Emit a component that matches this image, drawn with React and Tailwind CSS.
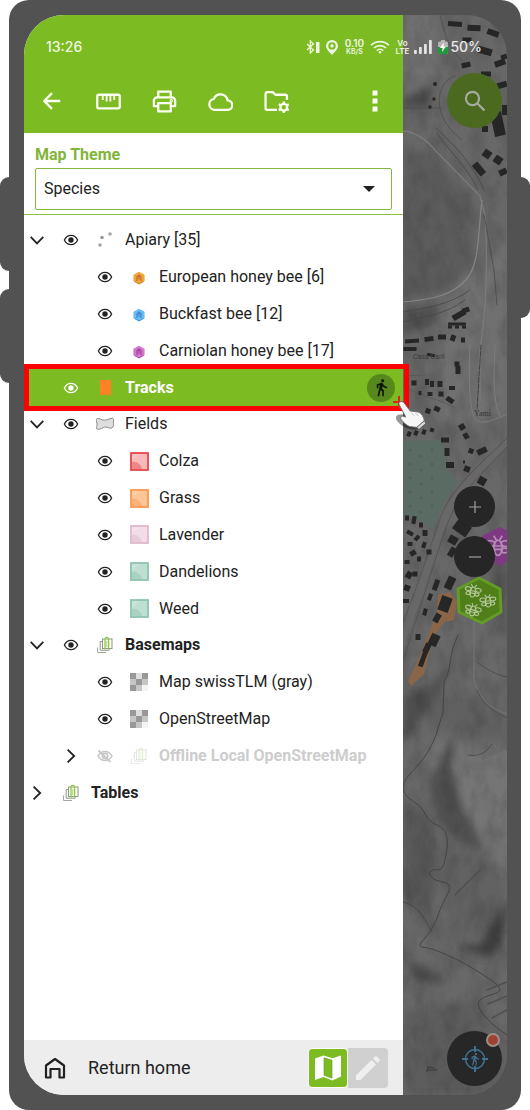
import React from "react";

function EyeIcon() {
  return (
    <svg viewBox="0 0 16 12" className="h-3 w-4" fill="none">
      <path d="M1.4 6C2.800 3 5 1.300 8 1.300S13.200 3 14.600 6C13.200 9 11 10.700 8 10.700S2.800 9 1.400 6Z" stroke="currentColor" strokeWidth="1.3" />
      <circle cx="8" cy="6" r="2.700" fill="currentColor" />
    </svg>
  );
}

function EyeOffIcon() {
  return (
    <svg viewBox="0 0 16 14" className="h-[14px] w-4" fill="none" stroke="currentColor" strokeWidth="1.6">
      <path d="M1.1 7C2.6 4 5 2.5 8 2.5S13.4 4 14.9 7C13.4 10 11 11.5 8 11.5S2.6 10 1.1 7Z" />
      <circle cx="8" cy="7" r="2.6" />
      <path d="M1.5 1.5 13.5 13.2" strokeWidth="1.8" />
    </svg>
  );
}

function Chevron({ open }) {
  return (
    <svg viewBox="0 0 16 16" className="h-4 w-4" fill="none" stroke="currentColor" strokeWidth="1.8">
      {open ? <path d="M1.7 4.8 8 11.4l6.3-6.6" /> : <path d="M4.6 1.7 11.2 8l-6.6 6.3" />}
    </svg>
  );
}

function PointsIcon() {
  return (
    <svg viewBox="0 0 18 18" className="h-[18px] w-[18px]">
      <circle cx="4" cy="14" r="1.8" fill="#a5a5a5" />
      <circle cx="6" cy="6.5" r="1.8" fill="#9a9a9a" />
      <circle cx="14" cy="3" r="1.8" fill="#a5a5a5" />
    </svg>
  );
}

function BeeDot({ fill, edge }) {
  return (
    <svg viewBox="0 0 14 14" className="mt-[2px] h-[14px] w-[14px]">
      <path d="M7 1.800 11.600 4.300v5.400L7 12.200 2.400 9.700V4.300Z" fill={fill} stroke={fill} strokeWidth="2" strokeLinejoin="round" />
      <path d="M5 10V5.800L7 4l2 1.800V10M7 5v3.500" fill="none" stroke={edge} strokeWidth="1.2" />
      <path d="M2.500 10.500 7 13l4.500-2.500" fill="none" stroke={edge} strokeWidth="0.8" />
    </svg>
  );
}

function FieldIcon() {
  return (
    <svg viewBox="0 0 20 14" className="h-[14px] w-5">
      <path d="M2.2 1.5C4.5.8 6 3.2 9.5 3.2S15.2.8 17.8 1.3c1 .3.8 2 .6 4s.6 3.200-.4 4.600-2.800 1.600-4.600.8-3.600-1-5.200 0S2.600 13 1.700 11.800C1 10.500 2.400 9 2 6.800S.8 2 2.200 1.500Z" fill="#dedede" stroke="#8b8b8b" strokeWidth="1" />
    </svg>
  );
}

function Swatch({ fill, edge }) {
  return (
    <svg viewBox="0 0 19 19" className="h-[19px] w-[19px]">
      <rect x="1" y="1" width="17" height="17" fill={fill} stroke={edge} strokeWidth="1.8" />
      <path d="M2 10C7 9 11 13 12 17H2Z" fill={edge} opacity="0.45" />
      <path d="M2 2h8L2 9Z" fill="#fff" opacity="0.15" />
    </svg>
  );
}

function BookmarkIcon() {
  return (
    <svg viewBox="0 0 11 16" className="h-4 w-[11px]">
      <path d="M0 0h11v16l-2.500-1.300h-6L0 16Z" fill="#ff8126" />
    </svg>
  );
}

function GroupIcon() {
  return (
    <svg viewBox="0 0 18 18" className="h-[18px] w-[18px]" fill="none">
      <path d="M1.500 11.500v5h8.500" stroke="#a3aa9d" strokeWidth="1" />
      <path d="M6 5.500H4.200v8.700h9V12" stroke="#8d9785" strokeWidth="1" />
      <rect x="6.500" y="3" width="9.500" height="9.500" stroke="#8d9785" strokeWidth="1" />
      <path d="M9 13.500V3.400c0-2.600 3.600-2.600 3.600 0v9.600" stroke="#8fc83c" strokeWidth="1.300" />
      <path d="M10.800 5v6" stroke="#a9d568" strokeWidth="1" />
    </svg>
  );
}

function RasterIcon() {
  return (
    <svg viewBox="0 0 18 18" className="h-[18px] w-[18px]" shapeRendering="crispEdges">
      <path d="M0 0h18v6h-6v6H6v6H0Z" fill="#c9c9c9" />
      <path d="M0 0h6v6H0zM12 0h6v6h-6zM6 6h6v6H6zM0 12h6v6H0z" fill="#989898" />
      <path d="M0 6h6v6H0zM12 6h6v6h-6zM6 12h6v6H6z" fill="#c6c6c6" />
      <path d="M12 12h6v6h-6z" fill="#f4f4f4" />
      <path d="M6 0h6v6H6z" fill="#dedede" />
    </svg>
  );
}

function WalkIcon({ className }) {
  return (
    <svg viewBox="0 0 24 24" className={className} fill="currentColor">
      <path d="M13.500 5.500c1.100 0 2-.9 2-2s-.9-2-2-2-2 .9-2 2 .9 2 2 2zM9.800 8.900 7 23h2.100l1.800-8 2.100 2v6h2v-7.500l-2.100-2 .6-3C14.800 12 16.800 13 19 13v-2c-1.900 0-3.500-1-4.300-2.400l-1-1.600c-.4-.6-1-1-1.700-1-.3 0-.5.1-.8.1L6 8.300V13h2V9.600l1.800-.7" />
    </svg>
  );
}

const rows = [
  { level: 0, chevron: "open", eye: "on", icon: <PointsIcon />, label: "Apiary [35]" },
  { level: 1, eye: "on", icon: <BeeDot fill="#f0a43c" edge="#bf7426" />, label: "European honey bee [6]" },
  { level: 1, eye: "on", icon: <BeeDot fill="#69bdf6" edge="#3b86cc" />, label: "Buckfast bee [12]" },
  { level: 1, eye: "on", icon: <BeeDot fill="#d576d0" edge="#984597" />, label: "Carniolan honey bee [17]" },
  { level: 0, eye: "on", icon: <BookmarkIcon />, label: "Tracks", bold: true, active: true },
  { level: 0, chevron: "open", eye: "on", icon: <FieldIcon />, label: "Fields" },
  { level: 1, eye: "on", icon: <Swatch fill="#f7b9b9" edge="#e4484c" />, label: "Colza" },
  { level: 1, eye: "on", icon: <Swatch fill="#fdc595" edge="#fa9850" />, label: "Grass" },
  { level: 1, eye: "on", icon: <Swatch fill="#f1dce8" edge="#dfb9cd" />, label: "Lavender" },
  { level: 1, eye: "on", icon: <Swatch fill="#bfdfd3" edge="#8dc4b0" />, label: "Dandelions" },
  { level: 1, eye: "on", icon: <Swatch fill="#bfdfd3" edge="#8dc4b0" />, label: "Weed" },
  { level: 0, chevron: "open", eye: "on", icon: <GroupIcon />, label: "Basemaps", bold: true },
  { level: 1, eye: "on", icon: <RasterIcon />, label: "Map swissTLM (gray)" },
  { level: 1, eye: "on", icon: <RasterIcon />, label: "OpenStreetMap" },
  { level: 1, chevron: "closed", eye: "off", icon: <GroupIcon />, label: "Offline Local OpenStreetMap", bold: true, dim: true },
  { level: 0, chevron: "closed", icon: <GroupIcon />, label: "Tables", bold: true },
];

function PointerHand() {
  return (
    <svg viewBox="0 0 36 40" className="pointer-events-none absolute -right-[26px] -bottom-[30px] h-10 w-9" fill="none">
      <ellipse cx="15" cy="26" rx="13" ry="6" fill="#000" opacity="0.4" transform="rotate(25 15 26)" />
      <path d="M6 0v12M0 6h12" stroke="#e0231b" strokeWidth="2" />
      <path d="M6.500 6.300C8 4.800 10.200 5.500 11.200 7l6 8 8 1c3.500 1.200 5.600 5 6.300 9.500L25 31.500l-8.500-1c-3-1-6.500-4.500-8.500-7.200-1.200-2.300.8-3.800 3-2.800l1.800.6L6.300 9c-.6-1-.5-2 .2-2.700Z" fill="#f6f6f6" stroke="#6b6b6b" strokeWidth="0.900" />
      <path d="m23.500 31.500 8-7 1.500 3-7 6Z" fill="#d5d5d5" stroke="#4d4d4d" strokeWidth="0.900" />
      <path d="m18 16.500 3 3M22.500 17l3 3" stroke="#b5b5b5" strokeWidth="0.800" />
    </svg>
  );
}

function LayerRow({ row }) {
  const tone = row.active ? "bg-[#7dbb23] text-white" : "text-[#222]";
  const faded = row.dim ? "opacity-25" : "";
  return (
    <li className={`relative flex min-h-0 items-center ${tone} ${row.level === 1 ? "pl-[34px]" : ""}`}>
      <span className="flex w-[30px] shrink-0 justify-center pr-1">
        {row.chevron && (
          <button type="button" aria-label={`Toggle ${row.label}`} aria-expanded={row.chevron === "open"}>
            <Chevron open={row.chevron === "open"} />
          </button>
        )}
      </span>
      {row.eye && (
        <button type="button" aria-label={`Visibility of ${row.label}`} className={`flex w-[34px] shrink-0 justify-center ${faded}`}>
          {row.eye === "on" ? <EyeIcon /> : <EyeOffIcon />}
        </button>
      )}
      <span className={`flex w-[34px] shrink-0 justify-center ${faded}`}>{row.icon}</span>
      <span className={`flex-1 truncate pl-[3px] text-base ${row.bold ? "font-bold" : ""} ${row.dim ? "text-[#cdcdcd]" : ""}`}>
        {row.label}
      </span>
      {row.active && (
        <>
          <button type="button" aria-label="Start tracking" className="mr-2 flex h-7 w-7 items-center justify-center rounded-full bg-[#57881b] text-[#0d1503]">
            <WalkIcon className="h-[19px] w-[19px]" />
          </button>
          <span className="pointer-events-none absolute -inset-y-[5px] -right-[6px] left-0 border-[5px] border-[#fd0000]" />
          <PointerHand />
        </>
      )}
    </li>
  );
}

const signalBars = [
  [0, 10, 4], [5, 7, 7], [10, 4, 10], [15, 0, 14],
];

function StatusBar() {
  return (
    <div className="absolute inset-x-0 top-0 z-20 flex h-16 items-center justify-between pr-[25px] pl-[22px] font-['Inter',sans-serif] text-[#eef6e0]">
      <span className="text-sm font-medium">13:26</span>
      <div className="flex items-center gap-[6px]">
        <svg viewBox="0 0 14 14" className="h-[14px] w-[14px]" fill="none">
          <path d="m1 4 6.500 6L4.300 13V1l3.200 3L1 10" stroke="currentColor" strokeWidth="1.300" />
          <rect x="10" y="2" width="3.500" height="11" rx="0.500" fill="currentColor" />
        </svg>
        <svg viewBox="0 0 12 15" className="h-[15px] w-3">
          <path fillRule="evenodd" d="M6 0a6 6 0 0 1 6 6c0 3.500-4 6.500-6 9C4 12.500 0 9.500 0 6a6 6 0 0 1 6-6Zm0 2.200A3.700 3.700 0 1 0 6 9.600 3.700 3.700 0 0 0 6 2.200Z" fill="currentColor" />
          <path d="M6 3.500 8 6 6 8 4 6Z" fill="currentColor" />
        </svg>
        <span className="flex w-5 flex-col items-center font-semibold">
          <span className="text-[10px] leading-[9px]">0.10</span>
          <span className="text-[7px] leading-[7px]">KB/S</span>
        </span>
        <svg viewBox="0 0 20 14" className="h-[14px] w-5" fill="none" stroke="currentColor" strokeWidth="1.700">
          <path d="M1 5.200a13 13 0 0 1 18 0M4 8a8.600 8.600 0 0 1 12 0M6.800 10.600a4.600 4.600 0 0 1 6.400 0" />
          <circle cx="10" cy="12.300" r="1.300" fill="currentColor" stroke="none" />
        </svg>
        <span className="flex w-3 flex-col items-center font-semibold">
          <span className="text-[8px] leading-[8px]">Vo</span>
          <span className="text-[8px] leading-[8px]">LTE</span>
        </span>
        <svg viewBox="0 0 18 14" className="h-[14px] w-[18px]" fill="#e3e3e3">
          {signalBars.map(([x, y, h]) => (
            <rect key={x} x={x} y={y} width="2.800" height={h} rx="0.800" />
          ))}
        </svg>
        <span className="flex items-center gap-[2px] text-[#e9e9e9]">
          <svg viewBox="0 0 10 14" className="h-[14px] w-[10px]">
            <path d="M3 0h4v1.500h1.500A1.500 1.500 0 0 1 10 3v9.500A1.500 1.500 0 0 1 8.500 14h-7A1.500 1.500 0 0 1 0 12.500V3a1.500 1.500 0 0 1 1.500-1.500H3Z" fill="#b5b5b5" />
            <path d="M0 7h10v5.500A1.500 1.500 0 0 1 8.500 14h-7A1.500 1.500 0 0 1 0 12.500Z" fill="#1f9a3c" />
            <path d="M6 2.500 2 8h2.500L4 12l4-5.500H5.500Z" fill="#fff" />
          </svg>
          <span className="text-sm font-medium">50%</span>
        </span>
      </div>
    </div>
  );
}

const tools = [
  {
    name: "Back",
    art: <path d="M21 12H4M12 3.500 3.500 12l8.500 8.500" strokeWidth="2.600" />,
  },
  {
    name: "Measure",
    art: <><rect x="1.200" y="5.500" width="21.600" height="13" rx="1.500" /><path d="M6.500 6v4.500M10.200 6v6M13.800 6v6M17.500 6v4.500" strokeWidth="1.800" /></>,
  },
  {
    name: "Print",
    art: <><path d="M6 7V2.500h12V7M6 16.500H1.800V11A3.500 3.500 0 0 1 5 8h14a3.500 3.500 0 0 1 3.200 3v5.500H18" /><rect x="6" y="13.500" width="12" height="8" /><circle cx="18.500" cy="11.300" r="0.600" /></>,
  },
  {
    name: "Cloud",
    art: <path d="M6.500 20A5.300 5.300 0 0 1 5.600 9.500 6.800 6.800 0 0 1 18.700 11 4.500 4.500 0 0 1 19 20Z" />,
  },
  {
    name: "Project folder",
    art: (
      <>
        <path d="M12.500 20H3a1.500 1.500 0 0 1-1.500-1.500v-14A1.500 1.500 0 0 1 3 3h5.500L11 5.500h9.500A1.500 1.500 0 0 1 22 7v3.500" />
        <circle cx="19" cy="17.500" r="3.200" />
        <path d="M19 12v2M19 21v2M14.200 14.700l1.800 1M22 19.300l1.800 1M14.200 20.300l1.800-1M22 15.700l1.800-1" />
      </>
    ),
  },
];

function Toolbar() {
  return (
    <div className="flex h-16 items-center text-[#fbfff2]">
      {tools.map((t) => (
        <button key={t.name} type="button" aria-label={t.name} className="flex w-14 justify-center">
          <svg viewBox="0 0 24 24" className={t.name === "Back" ? "h-[22px] w-[22px]" : "h-[25px] w-[25px]"} fill="none" stroke="currentColor" strokeWidth="2.200" strokeLinejoin="round">
            {t.art}
          </svg>
        </button>
      ))}
      <button type="button" aria-label="More" className="ml-auto flex w-14 justify-center">
        <svg viewBox="0 0 6 22" className="h-[22px] w-[6px]" fill="currentColor">
          <rect x="0.500" y="0.500" width="5" height="5" />
          <rect x="0.500" y="8.500" width="5" height="5" />
          <rect x="0.500" y="16.500" width="5" height="5" />
        </svg>
      </button>
    </div>
  );
}

function Drawer() {
  return (
    <div className="relative z-10 flex min-w-0 flex-1 flex-col bg-white">
      <header className="bg-[#7dbb23] pt-[54px]">
        <Toolbar />
      </header>
      <div className="border-b border-[#8fbd4a] px-[11px] pt-3 pb-1">
        <label htmlFor="theme" className="block text-base leading-5 font-bold text-[#82b438]">
          Map Theme
        </label>
        <div className="relative mt-[3px]">
          <select id="theme" defaultValue="Species" className="block h-[42px] w-full appearance-none rounded-xs border border-[#86b63c] bg-white pl-2 text-base text-[#222]">
            <option>Species</option>
          </select>
          <svg viewBox="0 0 12 6" className="pointer-events-none absolute top-[18px] right-[17px] h-[6px] w-3">
            <path d="M0 0h12L6 6Z" fill="#222" />
          </svg>
        </div>
      </div>
      <ul className="mt-[7px] grid h-[589px] auto-rows-fr">
        {rows.map((row) => (
          <LayerRow key={row.label} row={row} />
        ))}
      </ul>
      <footer className="mt-auto flex h-[55px] items-center bg-[#ededed] pr-[15px] pl-5 text-[#222]">
        <a href="#home" className="flex items-center gap-[22px] text-lg">
          <svg viewBox="0 0 22 22" className="h-[22px] w-[22px]" fill="none" stroke="currentColor" strokeWidth="2.200">
            <path d="M2 20.500V8.500L11 2l9 6.500v12h-4.500V12h-9v8.500Z" strokeLinejoin="round" />
          </svg>
          Return home
        </a>
        <div className="ml-auto flex">
          <button type="button" aria-label="Map mode" className="flex h-10 w-10 items-center justify-center rounded-sm border border-white bg-[#7dbb23]">
            <svg viewBox="0 0 26 26" className="h-[26px] w-[26px]">
              <path d="M0 3.500 8.500.5l9 2.800L26 .5v21l-8.500 4-9-3.500L0 25Z" fill="#fff" />
              <path d="M9 2.800 17 5.200v18L9 20.200Z" fill="#7dbb23" stroke="#5f9914" strokeWidth="0.600" />
            </svg>
          </button>
          <button type="button" aria-label="Edit mode" className="flex h-10 w-10 items-center justify-center rounded-r-sm bg-[#d0d0d0]">
            <svg viewBox="0 0 24 24" className="h-6 w-6" fill="#efefef">
              <path d="M0 24v-4.500L15.500 4 20 8.500 4.500 24ZM17 2.500 18.800.7a1.600 1.600 0 0 1 2.200 0l2.300 2.300a1.600 1.600 0 0 1 0 2.200L21.500 7Z" />
            </svg>
          </button>
        </div>
      </footer>
    </div>
  );
}

/* x, y, width, height, rotation */
const buildings = [
  [455, 24, 14, 5, 5], [474, 28, 13, 6, 3], [493, 33, 12, 6, 20], [467, 40, 9, 5, 0], [485, 51, 14, 7, 15],
  [466, 65, 9, 5, -12], [500, 63, 11, 6, -20], [504, 57, 6, 5, -20], [486, 74, 10, 5, 0], [502, 85, 10, 6, -15],
  [505, 110, 6, 10, 0], [498, 124, 11, 24, -12], [485, 129, 6, 6, 0], [487, 154, 8, 8, 35], [498, 160, 8, 8, 35],
  [479, 169, 7, 14, -40], [503, 172, 8, 6, -25],
  [459, 315, 14, 6, -30], [466, 310, 7, 5, -20], [457, 324, 18, 3, 0], [450, 327, 4, 3, 0], [457, 327, 4, 3, 0], [464, 327, 4, 3, 0],
  [412, 341, 14, 4, -5], [429, 339, 9, 5, -8], [442, 337, 8, 5, 0], [453, 338, 5, 6, 20], [463, 340, 4, 5, 0],
  [410, 349, 13, 4, 0], [457, 364, 5, 5, 0], [458, 370, 5, 8, 0], [431, 355, 8, 3, 10],
  [414, 383, 5, 5, 0], [427, 382, 4, 6, 0], [432, 384, 4, 6, 0], [440, 384, 5, 6, 0], [452, 388, 6, 4, 0],
  [407, 391, 4, 6, 0], [430, 394, 5, 4, 0], [441, 394, 5, 5, 0], [450, 400, 8, 5, 35], [420, 393, 3, 4, 0],
  [428, 411, 5, 5, 20], [437, 409, 6, 5, 25], [409, 434, 4, 5, 20], [416, 433, 4, 5, 20], [424, 432, 4, 5, 20], [432, 430, 4, 4, 20],
  [445, 440, 8, 5, 0], [447, 452, 5, 8, 0], [450, 465, 8, 6, 0], [462, 427, 6, 6, -30], [466, 436, 5, 6, -30],
  [467, 469, 6, 6, 20], [471, 451, 5, 5, 20], [482, 451, 10, 6, -25], [482, 481, 8, 8, 30], [464, 462, 2, 3, 0],
  [462, 528, 16, 12, 35], [453, 540, 9, 8, 30], [452, 552, 6, 10, 30],
  [407, 518, 4, 5, 0], [414, 520, 4, 8, 10], [421, 525, 4, 5, 0], [410, 533, 7, 4, 30], [425, 533, 5, 6, 0], [417, 538, 4, 6, 40],
  [410, 544, 5, 4, 0], [424, 545, 4, 6, 20], [429, 552, 5, 5, 0], [413, 553, 6, 5, -30], [407, 562, 5, 4, 0], [419, 559, 4, 5, 0],
  [409, 575, 6, 7, 30], [415, 574, 5, 5, 0], [407, 588, 6, 6, 20], [406, 601, 6, 4, 0],
  [450, 583, 8, 13, 25], [445, 604, 11, 15, 20], [437, 618, 6, 9, 30], [434, 640, 9, 12, 25], [427, 648, 6, 10, 25], [423, 659, 5, 16, 20],
  [436, 585, 5, 11, 20], [430, 597, 4, 7, 20], [425, 612, 4, 7, 15], [418, 637, 5, 6, 0],
];

function Bee({ x, y, turn, scale, color }) {
  return (
    <g transform={`translate(${x} ${y}) rotate(${turn}) scale(${scale})`} fill="none" stroke={color} strokeWidth="1">
      <ellipse cx="0" cy="1" rx="2.400" ry="4.500" />
      <path d="M-2.200 0h4.400M-2.300 2h4.600M-1 -3.500-2.500-6M1-3.500 2.500-6" />
      <ellipse cx="-4.600" cy="-1.400" rx="2.700" ry="1.700" />
      <ellipse cx="4.600" cy="-1.400" rx="2.700" ry="1.700" />
      <ellipse cx="-4" cy="2.600" rx="2" ry="1.400" />
      <ellipse cx="4" cy="2.600" rx="2" ry="1.400" />
    </g>
  );
}

function Terrain() {
  return (
    <svg viewBox="403 15 104 1080" preserveAspectRatio="xMinYMin slice" className="absolute inset-0 h-full w-full">
      <defs>
        <filter id="soft" x="-30%" y="-30%" width="160%" height="160%"><feGaussianBlur stdDeviation="4" /></filter>
        <filter id="grain" x="0" y="0" width="100%" height="100%">
          <feTurbulence type="fractalNoise" baseFrequency="0.07 0.04" numOctaves="4" seed="7" />
          <feColorMatrix values="0 0 0 0 0  0 0 0 0 0  0 0 0 0 0  1.600 0 0 0 -0.600" />
        </filter>
      </defs>
      <rect x="403" y="15" width="104" height="1080" fill="#686868" />
      <g filter="url(#soft)">
        <path d="M403 15h30l5 60-35 30Z" fill="#717171" />
        <path d="M403 95c15-2 25-5 32-14l-5 22-27 8Z" fill="#4b4b4b" />
        <path d="M403 150 430 150 475 205 470 270 440 292 403 296Z" fill="#5c5c5c" />
        <path d="M403 310 445 302 476 275 470 300 440 322 403 335Z" fill="#505050" />
        <path d="M440 300 507 240V420H440Z" fill="#707070" />
        <path d="M470 590h37v140h-70Z" fill="#696969" />
        <path d="M460 628 450 665 425 690 403 695V745L435 700 455 660Z" fill="#4e4e4e" />
        <path d="M430 700 470 690 507 720V740L450 735Z" fill="#616161" />
        <path d="M436 735 452 735 448 765 428 775Z" fill="#787878" />
        <path d="M403 800 430 815 440 860 430 930 403 900Z" fill="#585858" />
        <path d="M454 733 450 765 460 790 475 820 487 852 462 845 440 822 428 780Z" fill="#505050" />
        <path d="M455 865 475 850 470 885 455 890Z" fill="#777" />
        <path d="M440 895 452 897 445 915 435 920Z" fill="#757575" />
        <path d="M440 850 500 855 507 900 480 940 445 935Z" fill="#626262" />
        <path d="M495 915 507 905 500 950 485 957 455 945 480 945Z" fill="#3c3c3c" />
        <path d="M405 960 440 975 445 985 415 980Z" fill="#494949" />
        <path d="M403 1010 480 1000 507 1095H403Z" fill="#5d5d5d" />
        <path d="M490 560 507 555V640L495 620Z" fill="#555" />
      </g>
      <path d="M455 775C452 762 456 748 461 740l10 8 12 12 22-13 2 2v132l-18-24-12-26-13-18Z" fill="#757575" filter="url(#soft)" />
      <path d="M462 770 470 755 483 760 505 750 507 752v120l-16-22-12-26-12-20Z" fill="#757575" />
      <rect x="403" y="15" width="104" height="1080" filter="url(#grain)" opacity="0.16" />
      <path d="M403 441 443 440 449 470 457 482 441 509 433 530 420 520 403 514Z" fill="#5a6b64" />
      <g fill="#526159">
        {[450, 464, 478, 492, 506].map((y) => (
          <g key={y}>
            <circle cx="410" cy={y} r="1.500" />
            <circle cx="421" cy={y + 6} r="1.500" />
            <circle cx="432" cy={y} r="1.500" />
          </g>
        ))}
      </g>
      <g fill="none" strokeLinecap="round">
        <path d="M507 442C485 465 455 490 445 518S418 600 403 640" stroke="#696768" strokeWidth="6" />
        <path d="M507 438C483 462 451 488 441 516S414 596 403 622" stroke="#4c4c4c" strokeWidth="0.700" />
        <path d="M507 447C488 468 460 492 449 520S422 604 403 660" stroke="#4c4c4c" strokeWidth="0.700" />
        <path d="M403 131C415 132 425 138 435 150L480 196 485 215C488 260 486 310 480 350V400" stroke="#7a7a7a" strokeWidth="1.300" />
        <path d="M482 200C478 230 480 265 466 280S435 299 403 302" stroke="#858585" strokeWidth="1.200" />
        <path d="M403 312C425 308 450 305 470 290M403 322C425 316 445 315 465 300" stroke="#474747" strokeWidth="0.800" />
        <path d="M484 215 494 270 497 305M436 128C450 142 470 158 484 190M437 133C452 155 466 165 478 190" stroke="#454545" strokeWidth="0.700" />
        <path d="M481 345 477 410" stroke="#3b3b3b" strokeWidth="0.900" strokeDasharray="5 1.500" />
        <path d="M403 108 440 108C437 95 442 80 455 76M440 108C442 122 455 135 462 140M440 15 447 40C455 55 462 62 470 66" stroke="#4a4a4a" strokeWidth="0.700" />
        <path d="M470 345C468 380 470 415 476 420S495 420 507 414M495 345C494 370 492 400 500 416" stroke="#7d7d7d" strokeWidth="1" />
        <path d="M403 376 425 375M403 385C420 398 440 398 455 408" stroke="#555" strokeWidth="0.800" />
        <path d="M458 635C448 655 452 670 444 682L443 712 436 735C430 750 425 758 410 774S408 798 417 804 425 820 435 824 450 835 446 855 440 868 433 870 430 880 443 882 446 896 442 905 436 925 425 938 422 944 440 952 460 960 488 978 487 992 480 1000 492 1025 507 1035" stroke="#414141" strokeWidth="0.900" />
        <path d="M403 902C418 905 424 918 432 932M468 755C480 757 487 752 492 744" stroke="#424242" strokeWidth="0.700" />
        <path d="M474 615V680C480 700 490 708 507 714" stroke="#787878" strokeWidth="0.900" />
        <path d="M477 662C487 670 497 675 507 677M477 690C485 708 495 712 507 718" stroke="#464646" strokeWidth="0.700" />
        <path d="M428 1067 427 1072M427 1070h10M428 1067l6 1" stroke="#333" strokeWidth="0.800" />
        <path d="M487 990 507 982M488 1004 507 996M492 1018 507 1010M455 895 480 870" stroke="#4f4f4f" strokeWidth="1.500" />
      </g>
      <path d="M438 595 450 592 457 602 454 620 444 622 436 633 430 650 424 674 411 686 408 681 420 656 430 630 437 612Z" fill="#8b6547" />
      <g fill="#262626">
        {buildings.map(([x, y, w, h, r]) => (
          <rect key={`${x}-${y}`} x={x - w / 2} y={y - h / 2} width={w} height={h} transform={`rotate(${r} ${x} ${y})`} />
        ))}
        <circle cx="435" cy="84" r="2" />
        <circle cx="434" cy="99" r="1.700" />
        <circle cx="430" cy="107" r="1.700" />
      </g>
      <text x="413" y="359" fontSize="7" fill="#3a3a3a">Casa Carli</text>
      <text x="474" y="416" fontSize="8" fill="#333" className="font-['Liberation_Serif',serif]">Yami</text>
      <path d="M500 527 518 536V555L500 566 482 555V536Z" fill="#7d3a82" />
      <Bee x={498} y={546} turn={0} scale={1.700} color="#b48cb6" />
      <path d="M479 578 500 589 501 612 482 623 459 612 458 589Z" fill="#507f19" stroke="#649b27" strokeWidth="3" strokeLinejoin="round" />
      <Bee x={473} y={591} turn={10} scale={1.100} color="#b4c79c" />
      <Bee x={488} y={601} turn={-5} scale={1.100} color="#b4c79c" />
      <Bee x={473} y={610} turn={15} scale={1.100} color="#b4c79c" />
    </svg>
  );
}

function MapView() {
  const round = "absolute flex items-center justify-center rounded-full";
  return (
    <div className="relative w-[104px] shrink-0">
      <Terrain />
      <button type="button" aria-label="Search" className={`${round} top-[58px] right-[5px] h-[55px] w-[55px] bg-[#4b6a20] text-[#a6ab9f]`}>
        <svg viewBox="0 0 22 22" className="h-[22px] w-[22px]" fill="none" stroke="currentColor" strokeWidth="2.200">
          <circle cx="8.500" cy="8.500" r="6.600" />
          <path d="m13.500 13.500 7 7" />
        </svg>
      </button>
      <button type="button" aria-label="Zoom in" className={`${round} top-[471px] right-3 h-[41px] w-[41px] bg-[#262626] text-[#a0a0a0]`}>
        <svg viewBox="0 0 12 12" className="h-3 w-3" stroke="currentColor" strokeWidth="1.200"><path d="M0 6h12M6 0v12" /></svg>
      </button>
      <button type="button" aria-label="Zoom out" className={`${round} top-[521px] right-3 h-[41px] w-[41px] bg-[#262626] text-[#a0a0a0]`}>
        <svg viewBox="0 0 12 12" className="h-3 w-3" stroke="currentColor" strokeWidth="1.200"><path d="M0 6h12" /></svg>
      </button>
      <button type="button" aria-label="Locate" className={`${round} right-[5px] bottom-[9px] h-[55px] w-[55px] bg-[#272727] text-[#3f7195]`}>
        <svg viewBox="0 0 26 26" className="h-[26px] w-[26px]" fill="none" stroke="currentColor" strokeWidth="1.500">
          <circle cx="13" cy="13" r="9.500" />
          <path d="M13 0v6M13 20v6M0 13h6M20 13h6" strokeWidth="2" />
        </svg>
        <WalkIcon className="absolute h-[14px] w-[14px]" />
        <span className="absolute top-[2px] right-[2px] h-[14px] w-[14px] rounded-full border-2 border-[#9a8f8b] bg-[#a2402f]" />
      </button>
    </div>
  );
}

export default function App() {
  return (
    <div className="flex min-h-screen bg-white font-['Roboto',sans-serif]">
      <div className="flex w-[9px] shrink-0 flex-col gap-[18px] pt-[177px]">
        <div className="h-[94px] rounded-l-[9px] bg-[#525252]" />
        <div className="h-[94px] rounded-l-[9px] bg-[#525252]" />
      </div>
      <div className="flex min-w-0 flex-1 rounded-[20px] bg-[#525252] py-[15px] pr-[14px] pl-[15px]">
        <div className="relative flex min-w-0 flex-1 overflow-hidden rounded-[40px]">
          <StatusBar />
          <Drawer />
          <MapView />
        </div>
      </div>
      <div className="w-[9px] shrink-0 pt-[177px]">
        <div className="h-[141px] rounded-r-[9px] bg-[#525252]" />
      </div>
    </div>
  );
}
